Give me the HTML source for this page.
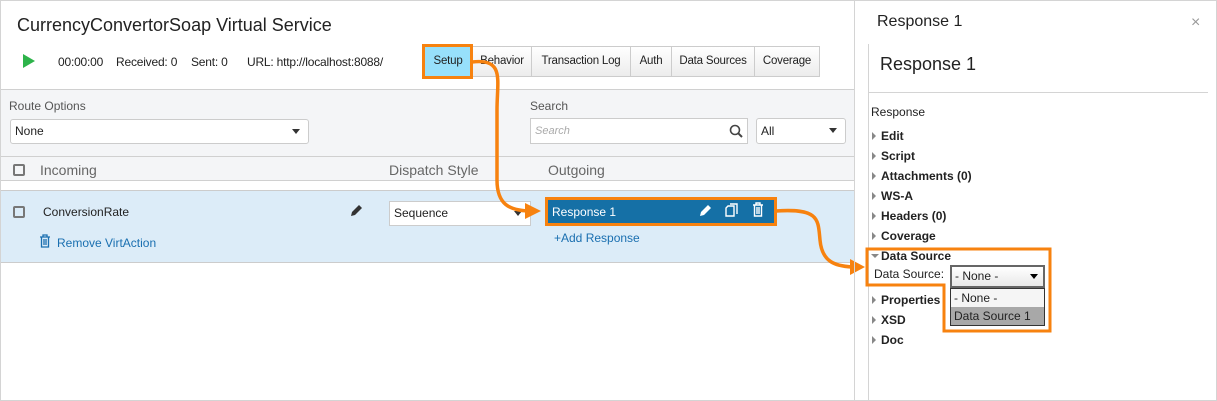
<!DOCTYPE html>
<html><head><meta charset="utf-8"><style>
*{box-sizing:border-box;margin:0;padding:0}
body{width:1217px;height:401px;position:relative;overflow:hidden;background:#fff;font-family:"Liberation Sans",sans-serif;color:#222;font-size:12px}
.a{position:absolute;white-space:nowrap}
.tab{position:absolute;top:46px;height:31px;border:1px solid #ccc;background:linear-gradient(#fff,#ececec);line-height:29px;text-align:center;font-size:11.5px;letter-spacing:-0.2px}
.sel{position:absolute;background:#fff;border:1px solid #ccc;border-radius:3px;font-size:12px;padding-left:4px}
.caret{position:absolute;right:8px;top:9px;border-left:4px solid transparent;border-right:4px solid transparent;border-top:5px solid #333}
.cb{position:absolute;width:12px;height:12px;border:2px solid #777;border-radius:2px}
.it{position:absolute;left:881px;font-weight:bold;font-size:12px}
.tri{position:absolute;left:872px;border-top:4px solid transparent;border-bottom:4px solid transparent;border-left:4px solid #888}
</style></head><body>
<div class="a" style="left:0;top:0;width:1217px;height:401px;border:1px solid #d4d4d4"></div>
<div class="a" style="left:17px;top:15px;font-size:18px;color:#222">CurrencyConvertorSoap Virtual Service</div>
<div class="a" style="left:23px;top:54px;border-top:7px solid transparent;border-bottom:7px solid transparent;border-left:12px solid #2db34a"></div>
<div class="a" style="left:58px;top:55px;letter-spacing:-0.2px">00:00:00</div>
<div class="a" style="left:116px;top:55px;letter-spacing:-0.2px">Received: 0</div>
<div class="a" style="left:191px;top:55px;letter-spacing:-0.2px">Sent: 0</div>
<div class="a" style="left:247px;top:55px;letter-spacing:-0.2px">URL: http://localhost:8088/</div>
<div class="tab" style="left:424px;width:48px;background:#97e0fb">Setup</div>
<div class="tab" style="left:472px;width:60px">Behavior</div>
<div class="tab" style="left:531px;width:100px">Transaction Log</div>
<div class="tab" style="left:630px;width:42px">Auth</div>
<div class="tab" style="left:671px;width:84px">Data Sources</div>
<div class="tab" style="left:754px;width:66px">Coverage</div>
<div class="a" style="left:422px;top:44px;width:51px;height:35px;border:3px solid #f7820f"></div>
<div class="a" style="left:1px;top:89px;width:853px;height:92px;background:#f4f5f7;border-top:1px solid #d0d0d0;border-bottom:1px solid #d0d0d0"></div>
<div class="a" style="left:1px;top:156px;width:853px;height:1px;background:#d0d0d0"></div>
<div class="a" style="left:9px;top:99px;color:#555">Route Options</div>
<div class="sel" style="left:10px;top:119px;width:299px;height:25px;line-height:23px">None<span class="caret"></span></div>
<div class="a" style="left:530px;top:99px;color:#555">Search</div>
<div class="sel" style="left:530px;top:118px;width:218px;height:26px;line-height:24px;font-style:italic;color:#aaa;font-size:11px;border-radius:0">Search
<svg style="position:absolute;right:4px;top:5px" width="14" height="14"><circle cx="6" cy="6" r="4.5" fill="none" stroke="#444" stroke-width="1.6"/><line x1="9.3" y1="9.3" x2="13" y2="13" stroke="#444" stroke-width="2"/></svg></div>
<div class="sel" style="left:756px;top:118px;width:90px;height:26px;line-height:24px">All<span class="caret"></span></div>
<div class="cb" style="left:13px;top:164px"></div>
<div class="a" style="left:40px;top:162px;font-size:14px;color:#666">Incoming</div>
<div class="a" style="left:389px;top:162px;font-size:14px;color:#666">Dispatch Style</div>
<div class="a" style="left:548px;top:162px;font-size:14px;color:#666">Outgoing</div>
<div class="a" style="left:1px;top:190px;width:853px;height:73px;background:#dcecf8;border-top:1px solid #ccc;border-bottom:1px solid #ccc"></div>
<div class="cb" style="left:13px;top:206px"></div>
<div class="a" style="left:43px;top:205px">ConversionRate</div>
<svg class="a" style="left:349px;top:203px" width="15" height="15"><path d="M2 13 L3 9 L10 2 L13 5 L6 12 Z" fill="#333"/></svg>
<div class="sel" style="left:389px;top:201px;width:142px;height:25px;line-height:23px;border-radius:0">Sequence<span class="caret"></span></div>
<svg class="a" style="left:39px;top:234px" width="12" height="14"><path d="M1 3h10M4 3V1h4v2M2.5 3v10h7V3M5 5v6M7 5v6" fill="none" stroke="#1a6fb0" stroke-width="1.3"/></svg>
<div class="a" style="left:57px;top:236px;color:#1a6fb0">Remove VirtAction</div>
<div class="a" style="left:545px;top:197px;width:232px;height:29px;border:3px solid #f7820f;background:#1570a6"></div>
<div class="a" style="left:552px;top:205px;color:#fff">Response 1</div>
<svg class="a" style="left:698px;top:202px" width="70" height="16"><path d="M2 14 L3 10 L10 3 L13 6 L6 13 Z" fill="#fff"/><path d="M30 4h6v10h-8V6z M32 2h7v10" fill="none" stroke="#fff" stroke-width="1.4"/><path d="M55 3h10M58 3V1h4v2M56.5 3v11h7V3M59 5v7M61 5v7" fill="none" stroke="#fff" stroke-width="1.4"/></svg>
<div class="a" style="left:554px;top:231px;color:#1a6fb0">+Add Response</div>
<svg class="a" style="left:0;top:0" width="1217" height="401">
<path d="M472 62 C505 58 497 80 497 110 L497 180 C497 205 510 210 528 211" fill="none" stroke="#f7820f" stroke-width="3.5"/>
<path d="M525 203 L541 211 L525 219 Z" fill="#f7820f"/>
<path d="M776 211 C820 208 818 220 820 240 C822 262 835 266 852 267" fill="none" stroke="#f7820f" stroke-width="3.5"/>
<path d="M850 259 L865 267 L850 275 Z" fill="#f7820f"/>
</svg>
<div class="a" style="left:854px;top:0;width:1px;height:401px;background:#d4d4d4"></div>
<div class="a" style="left:868px;top:44px;width:1px;height:357px;background:#d4d4d4"></div>
<div class="a" style="left:877px;top:13px;font-size:16px">Response 1</div>
<div class="a" style="left:1191px;top:14px;font-size:16px;color:#999">×</div>
<div class="a" style="left:880px;top:54px;font-size:18px">Response 1</div>
<div class="a" style="left:869px;top:92px;width:339px;height:1px;background:#d4d4d4"></div>
<div class="a" style="left:871px;top:105px">Response</div>
<div class="tri" style="top:132px"></div><div class="it" style="top:129px">Edit</div>
<div class="tri" style="top:152px"></div><div class="it" style="top:149px">Script</div>
<div class="tri" style="top:172px"></div><div class="it" style="top:169px">Attachments (0)</div>
<div class="tri" style="top:192px"></div><div class="it" style="top:189px">WS-A</div>
<div class="tri" style="top:212px"></div><div class="it" style="top:209px">Headers (0)</div>
<div class="tri" style="top:232px"></div><div class="it" style="top:229px">Coverage</div>
<div class="a" style="left:871px;top:254px;border-left:4px solid transparent;border-right:4px solid transparent;border-top:4px solid #888"></div>
<div class="it" style="top:249px">Data Source</div>
<div class="a" style="left:874px;top:267px">Data Source:</div>
<div class="a" style="left:950px;top:265px;width:95px;height:23px;border:2px solid #666;background:linear-gradient(#fff,#e8e8e8);padding-left:3px;line-height:19px">- None -<span class="caret" style="top:7px;right:5px;border-top-color:#000"></span></div>
<div class="a" style="left:950px;top:288px;width:95px;height:38px;border:1px solid #333;background:#f5f5f5"></div>
<div class="a" style="left:954px;top:291px">- None -</div>
<div class="a" style="left:951px;top:307px;width:93px;height:18px;background:#a8a8a8"></div>
<div class="a" style="left:954px;top:309px">Data Source 1</div>
<svg class="a" style="left:0;top:0" width="1217" height="401"><path d="M867 249 H1050 V331 H944 V285 H867 Z" fill="none" stroke="#f7820f" stroke-width="3"/></svg>
<div class="tri" style="top:296px"></div><div class="it" style="top:293px">Properties</div>
<div class="tri" style="top:316px"></div><div class="it" style="top:313px">XSD</div>
<div class="tri" style="top:336px"></div><div class="it" style="top:333px">Doc</div>
</body></html>
